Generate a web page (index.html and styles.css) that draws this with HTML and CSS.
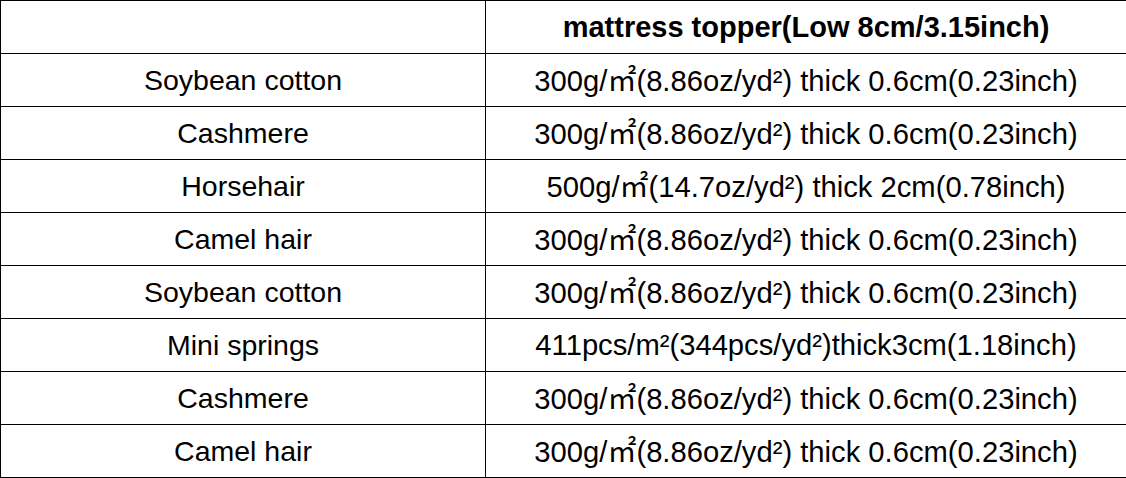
FILE: index.html
```html
<!DOCTYPE html>
<html>
<head>
<meta charset="utf-8">
<link rel="stylesheet" href="styles.css">
</head>
<body>
<table class="spec">
  <colgroup><col class="c1"><col class="c2"></colgroup>
  <tr class="head"><td></td><td>mattress topper(Low 8cm/3.15inch)</td></tr>
  <tr><td>Soybean cotton</td><td>300g/<span class="sq">㎡</span>(8.86oz/yd²) thick 0.6cm(0.23inch)</td></tr>
  <tr><td>Cashmere</td><td>300g/<span class="sq">㎡</span>(8.86oz/yd²) thick 0.6cm(0.23inch)</td></tr>
  <tr><td>Horsehair</td><td>500g/<span class="sq">㎡</span>(14.7oz/yd²) thick 2cm(0.78inch)</td></tr>
  <tr><td>Camel hair</td><td>300g/<span class="sq">㎡</span>(8.86oz/yd²) thick 0.6cm(0.23inch)</td></tr>
  <tr><td>Soybean cotton</td><td>300g/<span class="sq">㎡</span>(8.86oz/yd²) thick 0.6cm(0.23inch)</td></tr>
  <tr><td>Mini springs</td><td>411pcs/m²(344pcs/yd²)thick3cm(1.18inch)</td></tr>
  <tr><td>Cashmere</td><td>300g/<span class="sq">㎡</span>(8.86oz/yd²) thick 0.6cm(0.23inch)</td></tr>
  <tr><td>Camel hair</td><td>300g/<span class="sq">㎡</span>(8.86oz/yd²) thick 0.6cm(0.23inch)</td></tr>
</table>
</body>
</html>
```
FILE: styles.css
```css
html, body {
  margin: 0;
  padding: 0;
  background: #fff;
}
.spec {
  border-collapse: collapse;
  table-layout: fixed;
  width: 1126px;
  font-family: "Liberation Sans", Arial, sans-serif;
  font-size: 28.5px;
  color: #000;
}
.c1 { width: 485px; }
.c2 { width: 641px; }
.spec td {
  border: 1px solid #000;
  height: 52px;
  padding: 0;
  text-align: center;
  vertical-align: middle;
  white-space: nowrap;
  line-height: 30px;
}
.spec td + td {
  font-size: 29.2px;
}
.head td {
  font-weight: bold;
}
.head td + td {
  font-size: 29px;
}
.sq {
  font-family: "Noto Sans CJK JP", "DejaVu Serif", serif;
  font-size: 29px;
  line-height: 1;
}
```
